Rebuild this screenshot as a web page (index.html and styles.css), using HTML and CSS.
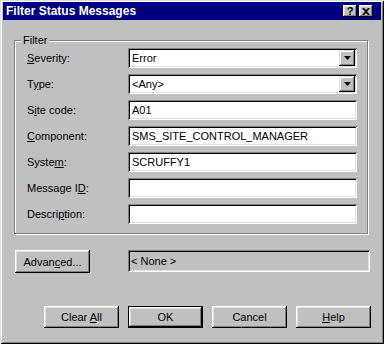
FILE: index.html
```html
<!DOCTYPE html>
<html lang="en">
<head>
    <meta charset="UTF-8">
    <title>Filter Status Messages</title>
    <link rel="stylesheet" href="styles.css">
</head>
<body>
    <div class="window">
        <div class="titlebar">
            <span class="title">Filter Status Messages</span>
            <div class="caption-buttons">
                <span class="cap-btn">?</span>
                <span class="cap-btn">
                    <svg width="8" height="7" viewBox="0 0 8 7">
                        <path d="M0 0h2l2 2 2-2h2L5 3.5 8 7H6L4 5 2 7H0l3-3.5z" fill="#000"/>
                    </svg>
                </span>
            </div>
        </div>

        <div class="client">
            <fieldset class="group">
                <legend>Filter</legend>
                <div class="form">
                    <label><u>S</u>everity:</label>
                    <div class="field combo">
                        <span>Error</span>
                        <span class="drop"><svg width="7" height="4" viewBox="0 0 7 4"><path d="M0 0h7L3.5 4z" fill="#000"/></svg></span>
                    </div>

                    <label>T<u>y</u>pe:</label>
                    <div class="field combo">
                        <span>&lt;Any&gt;</span>
                        <span class="drop"><svg width="7" height="4" viewBox="0 0 7 4"><path d="M0 0h7L3.5 4z" fill="#000"/></svg></span>
                    </div>

                    <label>S<u>i</u>te code:</label>
                    <input class="field" type="text" value="A01">

                    <label><u>C</u>omponent:</label>
                    <input class="field" type="text" value="SMS_SITE_CONTROL_MANAGER">

                    <label>Syste<u>m</u>:</label>
                    <input class="field" type="text" value="SCRUFFY1">

                    <label>Message I<u>D</u>:</label>
                    <input class="field" type="text" value="">

                    <label>Descri<u>p</u>tion:</label>
                    <input class="field" type="text" value="">
                </div>
            </fieldset>

            <div class="adv-row">
                <button class="btn adv">Advan<u>c</u>ed...</button>
                <div class="readout">&lt; None &gt;</div>
            </div>

            <div class="actions">
                <button class="btn">Clear <u>A</u>ll</button>
                <button class="btn default">OK</button>
                <button class="btn">Cancel</button>
                <button class="btn"><u>H</u>elp</button>
            </div>
        </div>
    </div>
</body>
</html>
```

FILE: styles.css
```css
body {
    margin: 0;
    background: #c0c0c0;
    font-family: "Liberation Sans", Arial, sans-serif;
    font-size: 11px;
    color: #000;
}

.window {
    width: 384px;
    height: 344px;
    box-sizing: border-box;
    padding: 2px 3px 3px;
    background: #c0c0c0;
    box-shadow: inset 1px 1px #dfdfdf, inset -1px -1px #000,
                inset 2px 2px #fff, inset -2px -2px #808080;
}

/* title bar */
.titlebar {
    height: 18px;
    background: #000080;
    color: #fff;
    display: flex;
    align-items: center;
    padding: 0 8px 0 3px;
}

.title {
    font-weight: bold;
    font-size: 12px;
}

.caption-buttons {
    margin-left: auto;
    display: flex;
    gap: 2px;
}

.cap-btn {
    width: 14px;
    height: 12px;
    background: #c0c0c0;
    color: #000;
    font-weight: bold;
    font-size: 11px;
    display: flex;
    align-items: center;
    justify-content: center;
    box-shadow: inset -1px -1px #000, inset 1px 1px #fff,
                inset -2px -2px #808080, inset 2px 2px #dfdfdf;
}

/* dialog body */
.client {
    padding: 0 10px 0 11px;
}

.group {
    margin: 14px 3px 0 0;
    padding: 1px 10px 9px 12px;
    border: 1px solid #808080;
    box-shadow: inset 1px 1px #fff, 1px 1px #fff;
    min-width: 0;
}

.group legend {
    margin-left: -6px;
    padding: 0 2px;
    line-height: 13px;
    background: #c0c0c0;
}

.form {
    display: grid;
    grid-template-columns: 101px 229px;
    grid-auto-rows: 20px;
    row-gap: 6px;
    align-items: center;
}

.field {
    height: 20px;
    width: 229px;
    box-sizing: border-box;
    border: 0;
    margin: 0;
    padding: 0 4px;
    background: #fff;
    font: inherit;
    color: #000;
    outline: none;
    box-shadow: inset 1px 1px #808080, inset -1px -1px #fff,
                inset 2px 2px #000, inset -2px -2px #dfdfdf;
}

.combo {
    display: flex;
    align-items: center;
    padding-right: 2px;
}

.drop {
    margin-left: auto;
    width: 16px;
    height: 16px;
    background: #c0c0c0;
    display: flex;
    align-items: center;
    justify-content: center;
    box-shadow: inset -1px -1px #000, inset 1px 1px #dfdfdf,
                inset -2px -2px #808080, inset 2px 2px #fff;
}

/* advanced row */
.adv-row {
    margin-top: 16px;
    display: grid;
    grid-template-columns: 114px 1fr;
}

.readout {
    height: 22px;
    box-sizing: border-box;
    padding: 0 3px;
    display: flex;
    align-items: center;
    margin-right: 1px;
    box-shadow: inset 1px 1px #808080, inset -1px -1px #fff,
                inset 2px 2px #000, inset -2px -2px #dfdfdf;
}

/* buttons */
.btn {
    width: 75px;
    height: 22px;
    box-sizing: border-box;
    padding: 0;
    border: 0;
    background: #c0c0c0;
    font: inherit;
    color: #000;
    box-shadow: inset -1px -1px #000, inset 1px 1px #fff,
                inset -2px -2px #808080, inset 2px 2px #dfdfdf;
}

.btn.adv {
    height: 23px;
    margin-left: 1px;
}

.btn.default {
    border: 1px solid #000;
}

.actions {
    margin-top: 33px;
    display: flex;
    justify-content: flex-end;
    gap: 9px;
}
```
